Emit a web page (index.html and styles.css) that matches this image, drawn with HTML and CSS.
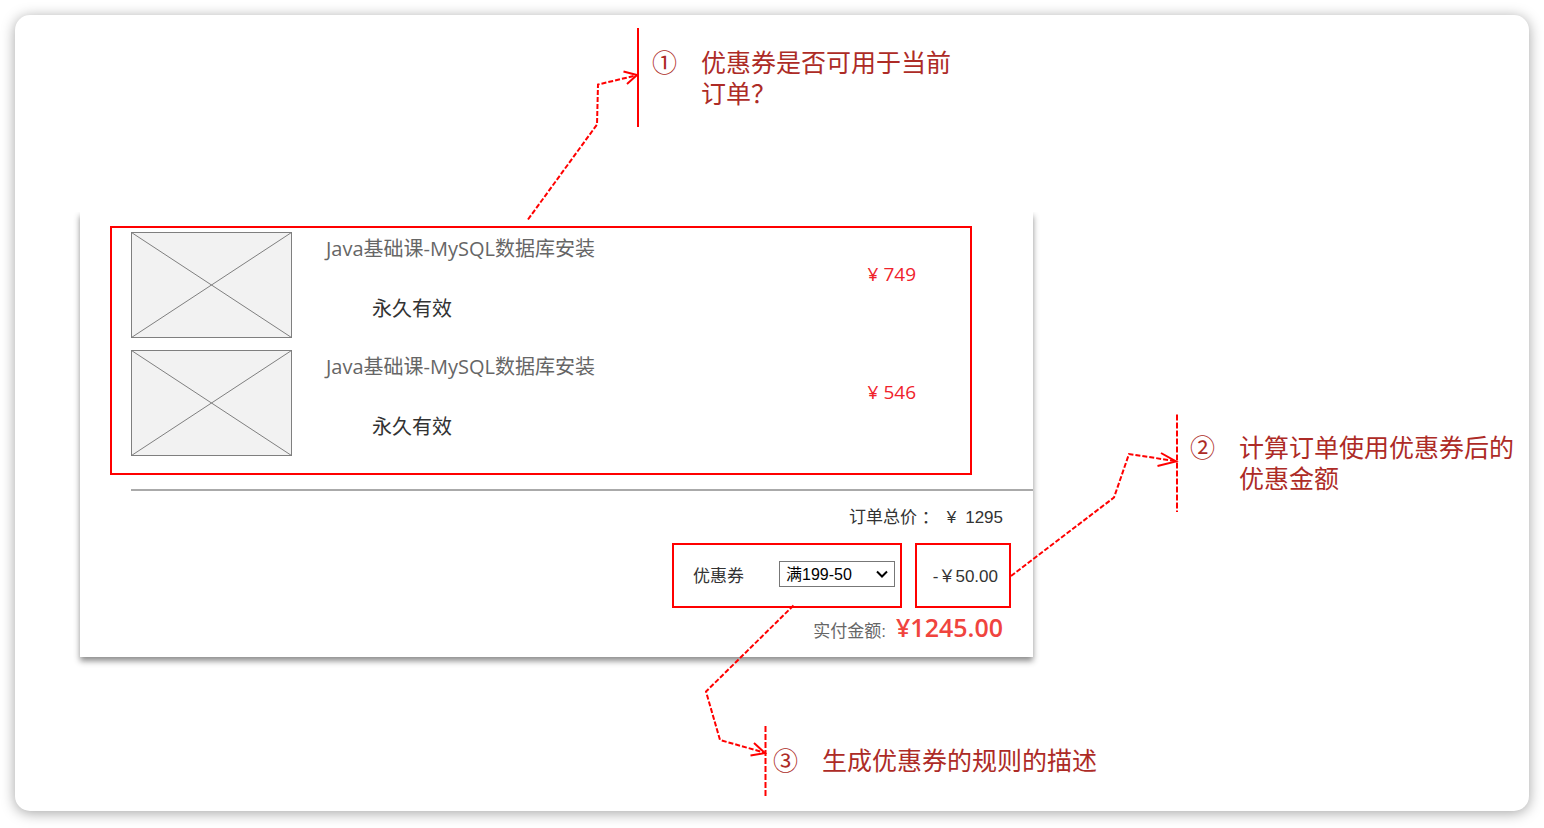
FILE: index.html
```html
<!DOCTYPE html>
<html lang="zh-CN">
<head>
<meta charset="utf-8">
<title>优惠券订单</title>
<link rel="stylesheet" href="styles.css">
</head>
<body>
<main class="sheet">
  <section class="order">
    <div class="marked courses">
      <article class="course">
        <svg class="thumb" viewBox="0 0 161 106" aria-hidden="true"><rect x="0.5" y="0.5" width="160" height="105"/><path d="M.5 .5 160.5 105.5M160.5 .5 .5 105.5"/></svg>
        <div class="course-info">
          <h2 class="course-title">Java基础课-MySQL数据库安装</h2>
          <p class="course-term">永久有效</p>
        </div>
        <span class="course-price">¥ 749</span>
      </article>
      <article class="course">
        <svg class="thumb" viewBox="0 0 161 106" aria-hidden="true"><rect x="0.5" y="0.5" width="160" height="105"/><path d="M.5 .5 160.5 105.5M160.5 .5 .5 105.5"/></svg>
        <div class="course-info">
          <h2 class="course-title">Java基础课-MySQL数据库安装</h2>
          <p class="course-term">永久有效</p>
        </div>
        <span class="course-price">¥ 546</span>
      </article>
    </div>
    <hr class="divider">
    <div class="summary">
      <p class="total"><span>订单总价 ：</span><span class="yen">¥</span><span>1295</span></p>
      <div class="discount-row">
        <div class="marked coupon">
          <label for="coupon">优惠券</label>
          <span class="select-wrap">
            <select id="coupon"><option>满199-50</option></select>
            <svg class="chevron" viewBox="0 0 12 8" aria-hidden="true"><path d="M1 1.5 6 6.5 11 1.5"/></svg>
          </span>
        </div>
        <div class="marked discount">-￥50.00</div>
      </div>
      <p class="payable"><span>实付金额:</span><strong>¥1245.00</strong></p>
    </div>
  </section>

  <p class="note note-usable"><span>①</span><span>优惠券是否可用于当前<br>订单？</span></p>
  <p class="note note-amount"><span>②</span><span>计算订单使用优惠券后的<br>优惠金额</span></p>
  <p class="note note-rule"><span>③</span><span>生成优惠券的规则的描述</span></p>

  <svg class="connectors" width="1514" height="796" viewBox="15 15 1514 796" aria-hidden="true">
    <path d="M638 28V127"/>
    <path class="bar" d="M1177 414.500V512M765.500 726V797"/>
    <path class="dash" d="M528 219.500 597 124.500 598 84.500 636 75.500"/>
    <path d="M623.500 71.500 637 75 627 84"/>
    <path class="dash" d="M1011 576 1114 497.500 1129 454 1175 461"/>
    <path d="M1161 453 1176 461.500 1157.500 466"/>
    <path class="dash" d="M793.500 605.500 706 691.500 720 740 764 752.500"/>
    <path d="M754 743 765 753 750.500 755.500"/>
  </svg>
</main>
</body>
</html>
```
FILE: styles.css
```css
* { box-sizing: border-box; }

body {
  margin: 0;
  min-height: 100vh;
  padding: 15px 15px 17px;
  display: flex;
  background: #fff;
  font-family: "Open Sans", "Noto Sans CJK SC", sans-serif;
  color: #333;
}

h2, p { margin: 0; font-weight: 400; }

.sheet {
  position: relative;
  flex: 1;
  border-radius: 15px;
  background: #fff;
  box-shadow: 0 2px 14px rgba(0, 0, 0, .36);
}

/* Diagram nodes */
.order {
  position: absolute;
  left: 65px;
  top: 197px;
  width: 953px;
  padding: 14px 0 6px 30px;
  background: #fff;
  box-shadow: 0 4px 6px rgba(0, 0, 0, .45);
  clip-path: inset(0 -12px -16px -12px);
}

.marked { border: 2px solid #f00; }

.courses {
  display: flex;
  flex-direction: column;
  gap: 12px;
  margin-right: 61px;
  padding: 4px 54px 17px 19px;
}

.course { display: flex; align-items: flex-start; }

.thumb {
  width: 161px;
  height: 106px;
  fill: #f2f2f2;
  stroke: #7f7f7f;
}

.course-info {
  flex: 1;
  display: flex;
  flex-direction: column;
  gap: 28px;
  padding-top: 1px;
  margin-left: 34px;
  font-size: 20px;
  line-height: 32px;
}

.course-title { font-size: 20px; color: #666; }
.course-term { padding-left: 46px; color: #333; }

.course-price {
  padding-top: 26px;
  font-size: 19px;
  line-height: 32px;
  color: #f0222b;
}

.divider {
  margin: 14px 0 0 21px;
  border: 0;
  border-top: 2px solid #aaa;
}

.summary {
  display: flex;
  flex-direction: column;
  align-items: flex-end;
  font-family: "Liberation Sans", "Noto Sans CJK SC", sans-serif;
  font-size: 17px;
  line-height: 24px;
}

.total { display: flex; padding: 15px 30px 13px 0; }
.yen { margin: 0 9px 0 8px; }

.discount-row { display: flex; gap: 13px; padding-right: 22px; }

.coupon {
  display: flex;
  align-items: center;
  gap: 35px;
  width: 230px;
  height: 65px;
  padding: 2px 5px 0 19px;
}

.select-wrap { position: relative; flex: 1; display: flex; margin-bottom: 6px; }

select {
  width: 100%;
  height: 26px;
  padding: 2px 6px 0;
  border: 1px solid #777;
  border-radius: 0;
  background: #fff;
  color: #000;
  font-family: "Liberation Sans", "Noto Sans CJK SC", sans-serif;
  font-size: 16px;
  appearance: none;
}

.chevron {
  position: absolute;
  right: 7px;
  top: 9px;
  width: 12px;
  height: 8px;
  fill: none;
  stroke: #000;
  stroke-width: 2;
  pointer-events: none;
}

.discount {
  display: flex;
  align-items: center;
  justify-content: flex-end;
  width: 96px;
  padding: 2px 11px 0 0;
}

.payable {
  display: flex;
  align-items: baseline;
  gap: 10px;
  padding-right: 30px;
  color: #666;
  line-height: 38px;
}

.payable strong {
  font-family: "Open Sans", sans-serif;
  font-size: 25px;
  font-weight: 600;
  color: #f0443e;
}

.note {
  position: absolute;
  display: flex;
  gap: 24px;
  font-family: "Liberation Sans", "Noto Sans CJK SC", sans-serif;
  font-size: 25px;
  line-height: 31px;
  white-space: nowrap;
  color: #ad2b26;
}

.note-usable { left: 637px; top: 33px; }
.note-amount { left: 1175px; top: 418px; }
.note-rule { left: 758px; top: 731px; }

.connectors {
  position: absolute;
  left: 0;
  top: 0;
  fill: none;
  stroke: #f00;
  stroke-width: 2;
  pointer-events: none;
}

.dash { stroke-dasharray: 5 2; }
.bar { stroke-dasharray: 6 2; }
```
